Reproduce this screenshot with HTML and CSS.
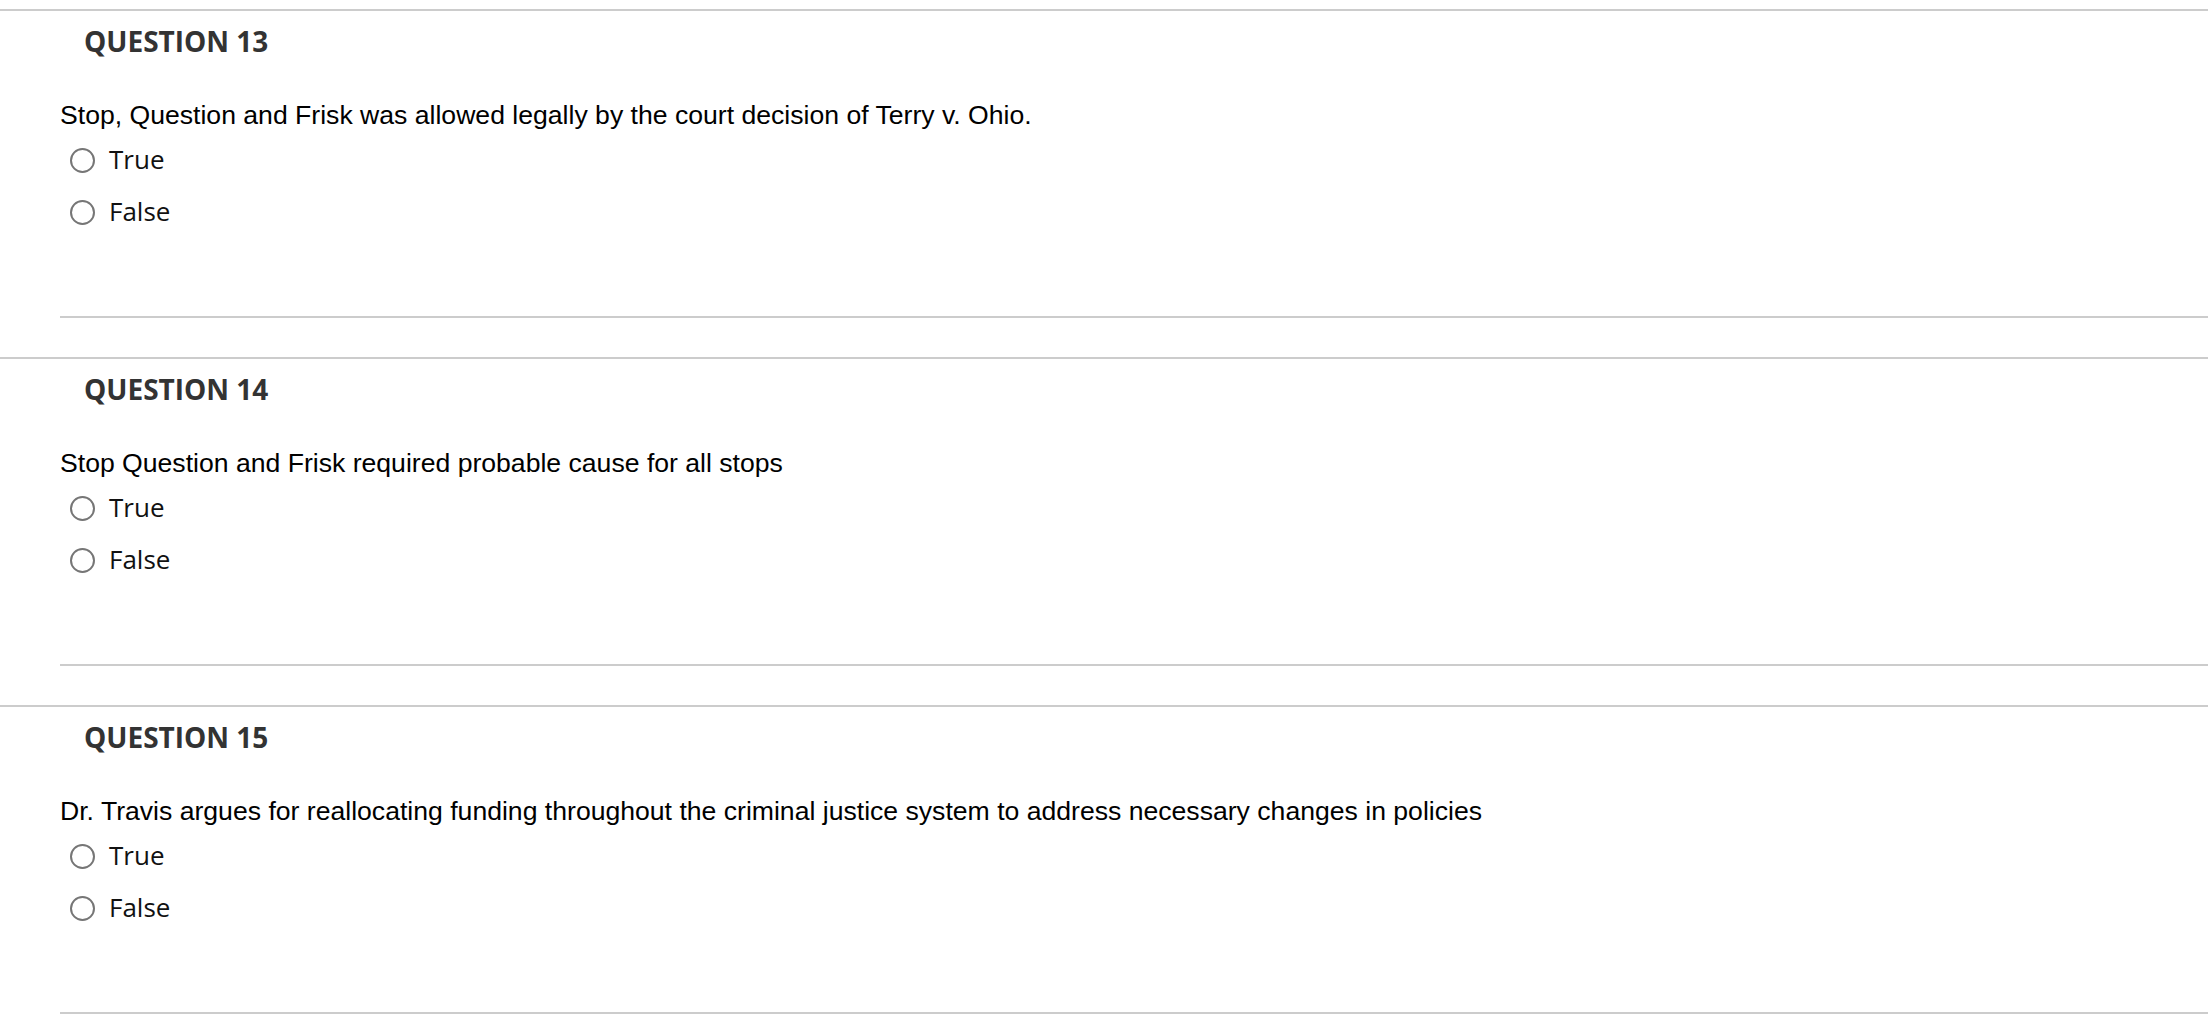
FILE: index.html
```html
<!DOCTYPE html>
<html>
<head>
<meta charset="utf-8">
<link rel="stylesheet" href="styles.css">
</head>
<body>
<div class="page">
  <section class="question">
    <h2 class="q-title">QUESTION 13</h2>
    <p class="q-text">Stop, Question and Frisk was allowed legally by the court decision of Terry v. Ohio.</p>
    <div class="options">
      <label class="option"><span class="radio"></span><span class="opt-label">True</span></label>
      <label class="option"><span class="radio"></span><span class="opt-label">False</span></label>
    </div>
    <div class="q-divider"></div>
  </section>
  <section class="question">
    <h2 class="q-title">QUESTION 14</h2>
    <p class="q-text">Stop Question and Frisk required probable cause for all stops</p>
    <div class="options">
      <label class="option"><span class="radio"></span><span class="opt-label">True</span></label>
      <label class="option"><span class="radio"></span><span class="opt-label">False</span></label>
    </div>
    <div class="q-divider"></div>
  </section>
  <section class="question">
    <h2 class="q-title">QUESTION 15</h2>
    <p class="q-text">Dr. Travis argues for reallocating funding throughout the criminal justice system to address necessary changes in policies</p>
    <div class="options">
      <label class="option"><span class="radio"></span><span class="opt-label">True</span></label>
      <label class="option"><span class="radio"></span><span class="opt-label">False</span></label>
    </div>
    <div class="q-divider"></div>
  </section>
</div>
</body>
</html>
```

FILE: styles.css
```css
html, body {
  margin: 0;
  padding: 0;
  background: #ffffff;
}

.page {
  padding-top: 9px;
}

.question {
  border-top: 2px solid #cccccc;
  padding: 11px 0 39px 60px;
}

.q-title {
  margin: 0 0 40px 24px;
  font-family: "Open Sans", sans-serif;
  font-weight: 700;
  font-size: 28px;
  line-height: 38px;
  color: #333333;
}

.q-text {
  margin: 0 0 3px 0;
  font-family: "Liberation Sans", Arial, sans-serif;
  font-size: 26.6px;
  line-height: 30px;
  color: #000000;
}

.options {
  display: flex;
  flex-direction: column;
}

.option {
  display: flex;
  align-items: center;
  height: 52px;
  padding-left: 10px;
}

.radio {
  box-sizing: border-box;
  width: 25px;
  height: 25px;
  border: 2px solid #767676;
  border-radius: 50%;
  margin-top: 2px;
  margin-right: 14px;
  flex: none;
}

.opt-label {
  font-family: "Open Sans", sans-serif;
  font-size: 26px;
  line-height: 52px;
  color: #111111;
}

.q-divider {
  margin-top: 79px;
  border-top: 2px solid #cccccc;
}
```
